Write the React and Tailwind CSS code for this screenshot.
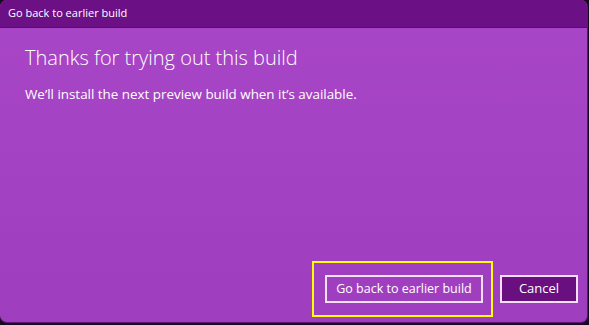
export default function App() {
  return (
    <div className="w-[589px] h-[325px] bg-[#1a0a20]" style={{ fontFamily: '"Open Sans", "Noto Sans", sans-serif' }}>
      <div className="w-[588px] h-[323px] flex flex-col rounded-[7px] overflow-hidden border-r border-b border-[#5c1674] bg-gradient-to-b from-[#a846c7] to-[#9e3ebf]">
        <div className="h-[28px] shrink-0 bg-[#6b1085] flex items-center px-2 text-white text-[11px] border-b border-[#5a0c70]">
          Go back to earlier build
        </div>
        <div className="flex-1 flex flex-col pl-[25px] pr-[9px] pt-[17px]">
          <h1 className="text-white text-[20px] leading-[26px] font-light">Thanks for trying out this build</h1>
          <p className="text-white text-[13.4px] leading-[18px] mt-[14px]">We’ll install the next preview build when it’s available.</p>
          <div className="mt-auto mb-[5px] flex items-center justify-end gap-[7px]">
            <div className="border-2 border-[#ffff00] pl-[11px] pr-[8px] py-[12px]">
              <button className="h-[28px] w-[158px] border-2 border-[#f3e0f7] text-white text-[12.5px] flex items-center justify-center">
                Go back to earlier build
              </button>
            </div>
            <button className="h-[28px] w-[78px] border-2 border-[#f3e0f7] bg-[#6a0f80] text-white text-[13px] flex items-center justify-center">
              Cancel
            </button>
          </div>
        </div>
      </div>
    </div>
  );
}
